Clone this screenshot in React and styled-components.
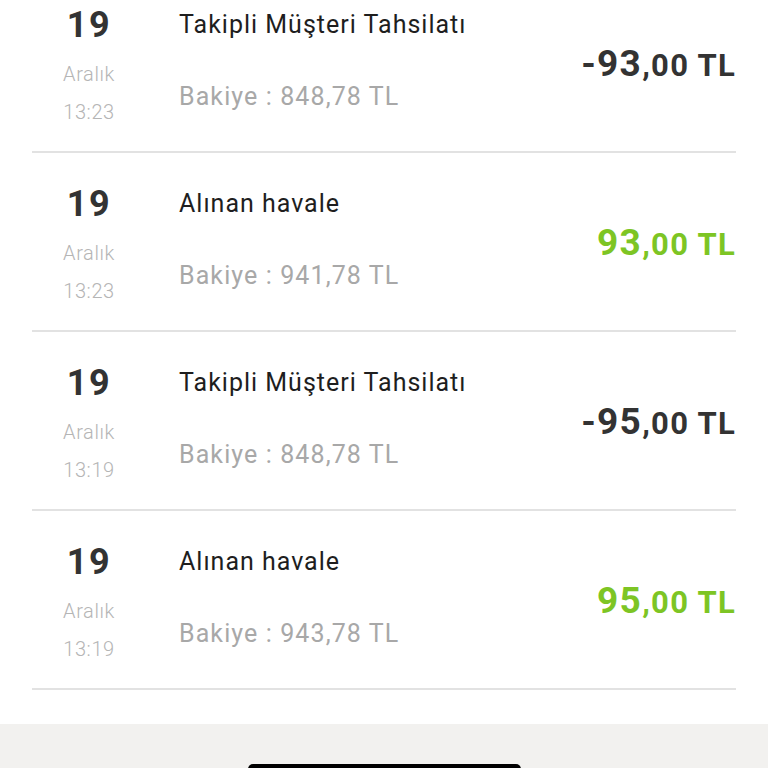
import React from 'react'
import styled, { createGlobalStyle } from 'styled-components'

const GlobalStyle = createGlobalStyle`
  html, body {
    margin: 0;
    padding: 0;
    background: #ffffff;
    overflow: hidden;
  }
  body {
    font-family: Roboto, "Noto Sans", Arial, sans-serif;
  }
`

const Screen = styled.div`
  width: 768px;
  height: 768px;
  display: flex;
  flex-direction: column;
  overflow: hidden;
  background: #fff;
`

const List = styled.div`
  margin-top: -26px;
  padding: 0 32px 34px;
  display: flex;
  flex-direction: column;
`

const Row = styled.div`
  display: flex;
  align-items: flex-start;
  height: 177px;
  border-bottom: 2px solid #e2e2e2;
  box-sizing: content-box;
`

const DateCol = styled.div`
  width: 114px;
  padding-top: 31px;
  display: flex;
  flex-direction: column;
  align-items: center;
`

const Day = styled.div`
  font-size: 36px;
  line-height: 40px;
  font-weight: 700;
  color: #333;
  letter-spacing: 1.5px;
`

const Meta = styled.div`
  font-size: 20px;
  line-height: 38px;
  font-weight: 300;
  color: #b5b5b5;
  letter-spacing: 0.6px;
  margin-top: ${(p) => p.$gap || 0}px;
`

const Info = styled.div`
  flex: 1;
  margin-left: 33px;
  padding-top: 31px;
  display: flex;
  flex-direction: column;
`

const Title = styled.div`
  font-size: 25px;
  line-height: 40px;
  color: #1e1e1e;
  letter-spacing: 1px;
`

const Balance = styled.div`
  margin-top: 32px;
  font-size: 25px;
  line-height: 40px;
  color: #a8a8a8;
  letter-spacing: 1.1px;
`

const Amount = styled.div`
  padding-top: 70px;
  font-weight: 700;
  line-height: 40px;
  color: ${(p) => (p.$income ? '#7dc524' : '#333')};
  white-space: nowrap;
  letter-spacing: 1.3px;
`

const Whole = styled.span`
  font-size: 37px;
`

const Fraction = styled.span`
  font-size: 31px;
`

const Footer = styled.div`
  flex: 1;
  background: #f2f1ef;
  display: flex;
  justify-content: center;
  align-items: flex-end;
`

const HomeBar = styled.div`
  width: 273px;
  height: 10px;
  margin-bottom: -6px;
  background: #000;
  border-radius: 6px;
`

const items = [
  { day: '19', month: 'Aralık', time: '13:23', title: 'Takipli Müşteri Tahsilatı', balance: '848,78 TL', whole: '-93', income: false },
  { day: '19', month: 'Aralık', time: '13:23', title: 'Alınan havale', balance: '941,78 TL', whole: '93', income: true },
  { day: '19', month: 'Aralık', time: '13:19', title: 'Takipli Müşteri Tahsilatı', balance: '848,78 TL', whole: '-95', income: false },
  { day: '19', month: 'Aralık', time: '13:19', title: 'Alınan havale', balance: '943,78 TL', whole: '95', income: true },
]

const App = () => (
  <>
    <GlobalStyle />
    <Screen>
      <List>
        {items.map((it, i) => (
          <Row key={i}>
            <DateCol>
              <Day>{it.day}</Day>
              <Meta $gap={10}>{it.month}</Meta>
              <Meta>{it.time}</Meta>
            </DateCol>
            <Info>
              <Title>{it.title}</Title>
              <Balance>Bakiye : {it.balance}</Balance>
            </Info>
            <Amount $income={it.income}>
              <Whole>{it.whole}</Whole>
              <Fraction>,00 TL</Fraction>
            </Amount>
          </Row>
        ))}
      </List>
      <Footer>
        <HomeBar />
      </Footer>
    </Screen>
  </>
)

export default App
